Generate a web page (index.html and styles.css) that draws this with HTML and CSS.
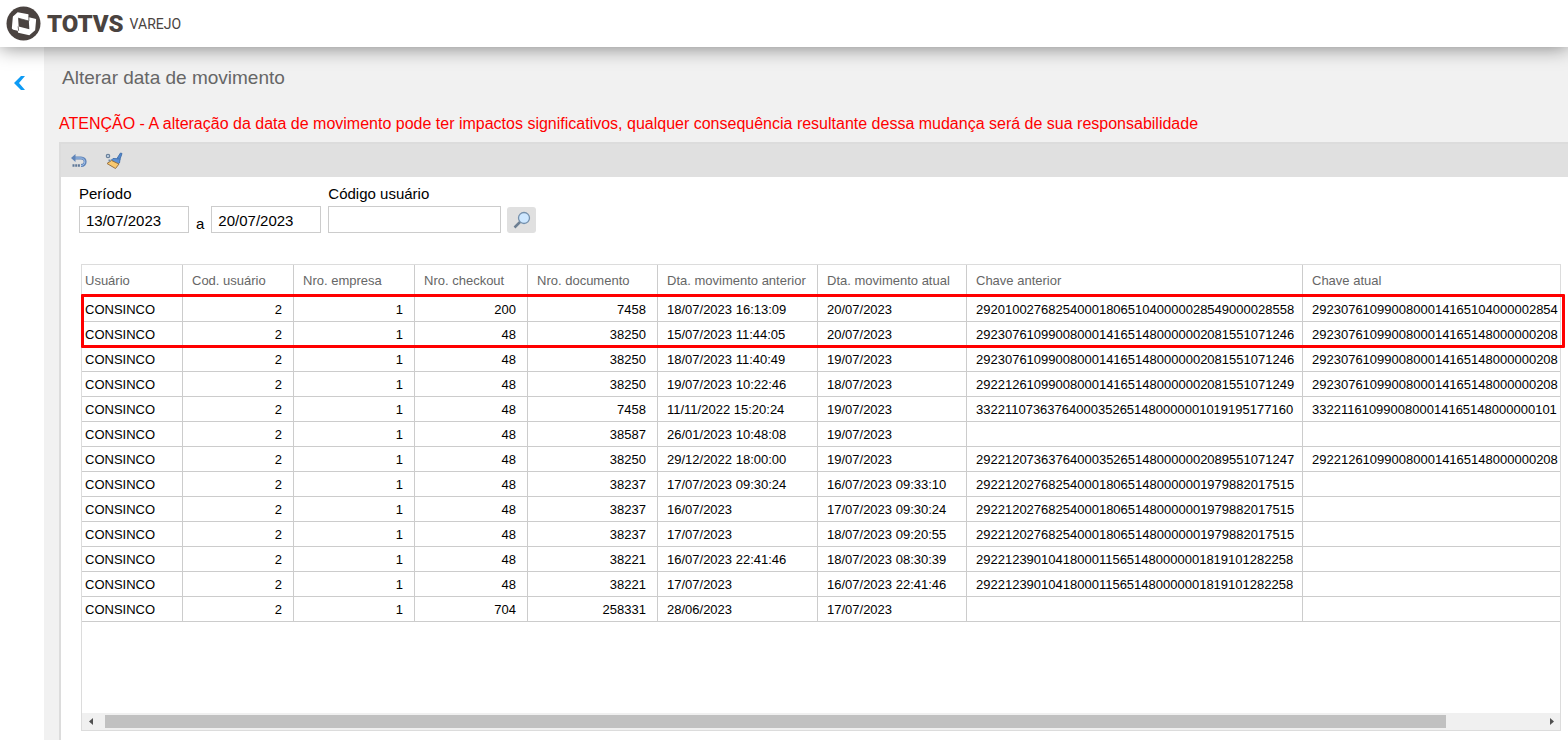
FILE: index.html
```html
<!DOCTYPE html>
<html lang="pt-BR">
<head>
    <meta charset="UTF-8">
    <meta name="viewport" content="width=device-width, initial-scale=1.0">
    <title>Alterar data de movimento</title>
    <link rel="stylesheet" href="styles.css">
</head>
<body>

    <header class="topbar">
        <svg class="logo" viewBox="0 0 36 36" aria-hidden="true">
            <circle cx="18" cy="18" r="17.5" fill="#4a4340"/>
            <path d="M7 11.500Q7 10.500 8 10L12 6.500L23 8.500L23.500 11.500L30 13Q31 13.200 31 14L30 25L24 30L12.500 27.500L12 25.500L7.500 24.500Q6 24 6 23Z" fill="#fff"/>
            <path d="M12.500 12.500L23.500 15.500L24 24L13 21Z" fill="#4a4340"/>
            <path d="M12.500 12.500L23.500 15.500M23.500 10V15.500M12.500 21L13 25.500" fill="none" stroke="#4a4340" stroke-width="0.800"/>
        </svg>
        <span class="brand">TOTVS</span>
        <span class="product">VAREJO</span>
    </header>

    <div class="layout">
        <aside class="sidebar">
            <button class="back" aria-label="Voltar">
                <svg viewBox="0 0 12 14" width="12" height="14"><path d="M7 0H11L5 7L11 14H7L0 7Z" fill="#0d9bf5"/></svg>
            </button>
        </aside>

        <main class="content">
            <h1>Alterar data de movimento</h1>
            <p class="warning">ATENÇÃO - A alteração da data de movimento pode ter impactos significativos, qualquer consequência resultante dessa mudança será de sua responsabilidade</p>

            <section class="panel">
                <div class="toolbar">
                    <button class="tool" aria-label="Desfazer">
                        <svg viewBox="0 0 16 16" width="16" height="16" fill="none">
                            <path d="M2 5H10C15.500 5 15.500 12.500 10 12.500" stroke="#5f84b8" stroke-width="3"/>
                            <path d="M3 5H10C15 5 15 12.500 10 12.500" stroke="#a5c4ee" stroke-width="1"/>
                            <path d="M0 5L4.500 1V9Z" fill="#5f84b8"/>
                            <path d="M1.500 12.500H9" stroke="#5f7898" stroke-width="2.500" stroke-dasharray="2 0.700"/>
                        </svg>
                    </button>
                    <button class="tool" aria-label="Limpar">
                        <svg viewBox="0 0 18 18" width="18" height="18">
                            <path d="M12 6.500L15.500 1L17 1.500L14.500 8.500Z" fill="#4f87d0" stroke="#4673ad" stroke-width="1"/>
                            <path d="M8 6.500L15 7L14.500 11L12.500 12L6.500 8Z" fill="#5c92d8" stroke="#4673ad" stroke-width="1"/>
                            <path d="M6.500 8.500L14 12L10.500 16.500L2 11.500Z" fill="#f9c96f" stroke="#987346" stroke-width="1"/>
                            <circle cx="3" cy="4" r="1.700" fill="#c6d6e6" stroke="#69809b" stroke-width="1.200"/>
                            <path d="M3.500 7.500H5.500V9.500H3.500Z" fill="#7189a3"/>
                        </svg>
                    </button>
                </div>

                <form class="filters">
                    <div class="field">
                        <label for="inicio">Período</label>
                        <input class="date" type="text" id="inicio" value="13/07/2023">
                    </div>
                    <label class="until" for="fim">a</label>
                    <input class="date" type="text" id="fim" value="20/07/2023">
                    <div class="field user">
                        <label for="usuario">Código usuário</label>
                        <input class="code" type="text" id="usuario">
                    </div>
                    <button class="search" type="button" aria-label="Pesquisar">
                        <svg viewBox="0 0 18 18" width="18" height="18">
                            <path d="M1.500 16.500L7.500 10.500" stroke="#6d7f92" stroke-width="2.500"/>
                            <circle cx="11" cy="7" r="5.500" fill="#cde7ff" stroke="#7590ac" stroke-width="1.300"/>
                        </svg>
                    </button>
                </form>

                <div class="grid">
                    <table>
                        <colgroup>
                            <col class="c-name">
                            <col class="c-user">
                            <col class="c-company">
                            <col class="c-checkout">
                            <col class="c-doc">
                            <col class="c-before">
                            <col class="c-now">
                            <col class="c-key">
                            <col>
                        </colgroup>
                        <thead>
                            <tr><th>Usuário</th><th>Cod. usuário</th><th>Nro. empresa</th><th>Nro. checkout</th><th>Nro. documento</th><th>Dta. movimento anterior</th><th>Dta. movimento atual</th><th>Chave anterior</th><th>Chave atual</th></tr>
                        </thead>
                        <tbody>
                            <tr><td>CONSINCO</td><td class="num">2</td><td class="num">1</td><td class="num">200</td><td class="num">7458</td><td>18/07/2023 16:13:09</td><td>20/07/2023</td><td>29201002768254000180651040000028549000028558</td><td>2923076109900800014165104000002854</td></tr>
                            <tr><td>CONSINCO</td><td class="num">2</td><td class="num">1</td><td class="num">48</td><td class="num">38250</td><td>15/07/2023 11:44:05</td><td>20/07/2023</td><td>29230761099008000141651480000002081551071246</td><td>2923076109900800014165148000000208</td></tr>
                            <tr><td>CONSINCO</td><td class="num">2</td><td class="num">1</td><td class="num">48</td><td class="num">38250</td><td>18/07/2023 11:40:49</td><td>19/07/2023</td><td>29230761099008000141651480000002081551071246</td><td>2923076109900800014165148000000208</td></tr>
                            <tr><td>CONSINCO</td><td class="num">2</td><td class="num">1</td><td class="num">48</td><td class="num">38250</td><td>19/07/2023 10:22:46</td><td>18/07/2023</td><td>29221261099008000141651480000002081551071249</td><td>2923076109900800014165148000000208</td></tr>
                            <tr><td>CONSINCO</td><td class="num">2</td><td class="num">1</td><td class="num">48</td><td class="num">7458</td><td>11/11/2022 15:20:24</td><td>19/07/2023</td><td>33221107363764000352651480000001019195177160</td><td>3322116109900800014165148000000101</td></tr>
                            <tr><td>CONSINCO</td><td class="num">2</td><td class="num">1</td><td class="num">48</td><td class="num">38587</td><td>26/01/2023 10:48:08</td><td>19/07/2023</td><td></td><td></td></tr>
                            <tr><td>CONSINCO</td><td class="num">2</td><td class="num">1</td><td class="num">48</td><td class="num">38250</td><td>29/12/2022 18:00:00</td><td>19/07/2023</td><td>29221207363764000352651480000002089551071247</td><td>2922126109900800014165148000000208</td></tr>
                            <tr><td>CONSINCO</td><td class="num">2</td><td class="num">1</td><td class="num">48</td><td class="num">38237</td><td>17/07/2023 09:30:24</td><td>16/07/2023 09:33:10</td><td>29221202768254000180651480000001979882017515</td><td></td></tr>
                            <tr><td>CONSINCO</td><td class="num">2</td><td class="num">1</td><td class="num">48</td><td class="num">38237</td><td>16/07/2023</td><td>17/07/2023 09:30:24</td><td>29221202768254000180651480000001979882017515</td><td></td></tr>
                            <tr><td>CONSINCO</td><td class="num">2</td><td class="num">1</td><td class="num">48</td><td class="num">38237</td><td>17/07/2023</td><td>18/07/2023 09:20:55</td><td>29221202768254000180651480000001979882017515</td><td></td></tr>
                            <tr><td>CONSINCO</td><td class="num">2</td><td class="num">1</td><td class="num">48</td><td class="num">38221</td><td>16/07/2023 22:41:46</td><td>18/07/2023 08:30:39</td><td>29221239010418000115651480000001819101282258</td><td></td></tr>
                            <tr><td>CONSINCO</td><td class="num">2</td><td class="num">1</td><td class="num">48</td><td class="num">38221</td><td>17/07/2023</td><td>16/07/2023 22:41:46</td><td>29221239010418000115651480000001819101282258</td><td></td></tr>
                            <tr><td>CONSINCO</td><td class="num">2</td><td class="num">1</td><td class="num">704</td><td class="num">258331</td><td>28/06/2023</td><td>17/07/2023</td><td></td><td></td></tr>
                        </tbody>
                    </table>

                    <div class="highlight"></div>

                    <div class="scrollbar">
                        <button class="arrow" aria-label="Rolar para a esquerda">
                            <svg viewBox="0 0 4 7" width="4" height="7"><path d="M4 0V7L0 3.500Z" fill="#505050"/></svg>
                        </button>
                        <div class="track"><div class="thumb"></div></div>
                        <button class="arrow" aria-label="Rolar para a direita">
                            <svg viewBox="0 0 4 7" width="4" height="7"><path d="M0 0V7L4 3.500Z" fill="#505050"/></svg>
                        </button>
                    </div>
                </div>
            </section>
        </main>
    </div>

</body>
</html>
```
FILE: styles.css
```css
* {
    margin: 0;
    padding: 0;
    box-sizing: border-box;
}

body {
    font-family: "Liberation Sans", Arial, sans-serif;
    background-color: #f1f1f1;
    display: flex;
    flex-direction: column;
    min-height: 100vh;
}

button {
    border: none;
    background: none;
    cursor: pointer;
}

svg {
    display: block;
}

/* Cabeçalho */
.topbar {
    position: relative;
    z-index: 1;
    display: flex;
    align-items: center;
    height: 47px;
    padding-left: 6px;
    background: #fff;
    box-shadow: 0 0 20px rgba(0, 0, 0, 0.5);
    color: #4a4340;
    font-family: Roboto, sans-serif;
}

.logo {
    width: 35px;
    height: 35px;
}

.brand {
    margin: 0 6px;
    font-size: 24px;
    font-weight: 900;
}

.product {
    font-size: 14px;
}

.layout {
    display: flex;
    flex: 1;
}

.sidebar {
    width: 44px;
    padding: 29px 14px;
    background: #fff;
}

.content {
    display: flex;
    flex-direction: column;
    flex: 1;
    min-width: 0;
    padding-left: 15px;
}

h1 {
    padding: 20px 3px 0;
    font-size: 19px;
    font-weight: normal;
    line-height: 22px;
    color: #666;
}

.warning {
    margin: 25px 0 8px;
    font-size: 16px;
    line-height: 20px;
    color: #f00;
}

.panel {
    display: flex;
    flex-direction: column;
    flex: 1;
    padding-bottom: 9px;
    border-top: 2px solid #dcdcdc;
    border-left: 2px solid #dcdcdc;
    background: #fff;
}

.toolbar {
    display: flex;
    align-items: center;
    gap: 18px;
    height: 33px;
    padding-left: 10px;
    background: #e0e0e0;
}

/* Filtros */
.filters {
    display: flex;
    align-items: flex-end;
    padding: 8px 18px 0;
    font-size: 15px;
    line-height: 18px;
}

.field {
    display: flex;
    flex-direction: column;
    gap: 3px;
}

.filters input {
    height: 27px;
    padding: 2px 6px 0;
    border: 1px solid #ccc;
    font: inherit;
}

.filters .date {
    width: 110px;
}

.filters .code {
    width: 173px;
}

.until {
    padding: 0 7px;
}

.user {
    margin-left: 7px;
}

.search {
    display: flex;
    align-items: center;
    justify-content: center;
    width: 29px;
    height: 26px;
    margin-left: 6px;
    border-radius: 3px;
    background: #e0e0e0;
}

/* Tabela */
.grid {
    position: relative;
    display: flex;
    flex-direction: column;
    justify-content: space-between;
    flex: 1;
    margin: 31px 7px 0 20px;
    border: 1px solid #dcdcdc;
}

table {
    width: 100%;
    table-layout: fixed;
    border-collapse: separate;
    border-spacing: 0;
    font-size: 13px;
}

.c-name { width: 101px; }
.c-user { width: 111px; }
.c-company { width: 121px; }
.c-checkout { width: 113px; }
.c-doc { width: 130px; }
.c-before { width: 160px; }
.c-now { width: 149px; }
.c-key { width: 336px; }

th,
td {
    height: 25px;
    padding: 0 0 0 9px;
    border-right: 1px solid #ccc;
    border-bottom: 1px solid #ccc;
    text-align: left;
    white-space: nowrap;
    overflow: hidden;
}

th {
    height: 32px;
    font-weight: normal;
    color: #666;
}

th:first-child,
td:first-child {
    padding-left: 3px;
}

th:last-child,
td:last-child {
    border-right: none;
}

td.num {
    padding-right: 11px;
    text-align: right;
}

/* Contorno dos dois primeiros registros */
.highlight {
    position: absolute;
    top: 29px;
    left: -1px;
    right: -5px;
    height: 54px;
    border: 3px solid #f00;
    border-radius: 1px;
    pointer-events: none;
}

.scrollbar {
    display: flex;
    height: 17px;
    background: #f0f0f0;
}

.arrow {
    display: flex;
    align-items: center;
    justify-content: center;
    width: 17px;
}

.track {
    flex: 1;
    padding: 2px 11px 2px 6px;
}

.thumb {
    width: 94%;
    height: 13px;
    background: #c1c1c1;
}
```
